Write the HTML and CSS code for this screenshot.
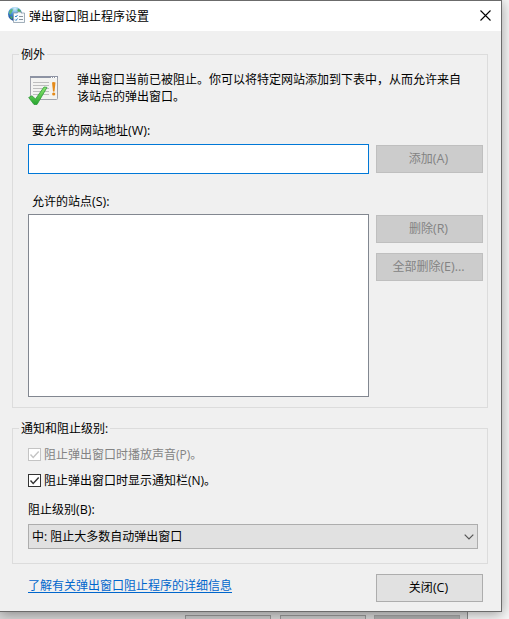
FILE: index.html
```html
<!DOCTYPE html>
<html lang="zh-CN">
<head>
<meta charset="utf-8">
<title>弹出窗口阻止程序设置</title>
<link rel="stylesheet" href="styles.css">
</head>
<body>
<div class="desktop">
<main class="dialog">
  <header class="titlebar">
    <svg class="app-icon" width="17" height="17" viewBox="0 0 17 17">
      <defs><radialGradient id="globe" cx="50%" cy="12%" r="90%"><stop offset="0" stop-color="#d5f1fa"/><stop offset=".45" stop-color="#4795da"/><stop offset="1" stop-color="#153f91"/></radialGradient></defs>
      <circle cx="7" cy="7" r="7" fill="url(#globe)"/>
      <path d="M10 1.500l2.500 2 1 3-2.500-.5-1.500-2.500z" fill="#4fae55"/>
      <path d="M1.500 4l2-2 1.500.5-1 2.500-1.500 2.500-1.500-.5z" fill="#5cb87a"/>
      <path d="M2.500 9l2 1-.5 2-1.500-1z" fill="#4fae55"/>
      <path d="M5.500 6h4v-1h3.500v1h3.500v9.500h-11z" fill="#f7fafc" stroke="#8a9aa8" stroke-width=".8"/>
      <path d="M7 9l1 1 1.500-2M7 12.500l1 1 1.500-2" fill="none" stroke="#2d83c7"/>
      <path d="M11 9.500h4M11 12.500h4" stroke="#8a949e"/>
    </svg>
    <h1>弹出窗口阻止程序设置</h1>
    <svg class="close" width="11" height="11" viewBox="0 0 11 11"><path d="M.5 .5l10 10M10.500 .5l-10 10" stroke="#000" stroke-width="1.100"/></svg>
  </header>

  <fieldset class="group exceptions">
    <legend>例外</legend>
    <div class="intro">
      <svg class="status-icon" width="32" height="32" viewBox="0 0 32 32">
        <defs>
          <linearGradient id="check" x2="0" y2="1"><stop stop-color="#8ee86f"/><stop offset="1" stop-color="#27a52f"/></linearGradient>
        </defs>
        <rect x="2.500" y="2.500" width="27" height="23" rx="1" fill="#f3f3f1" stroke="#a2a4ad"/>
        <path d="M2 3h28" stroke="#8d93a3" stroke-width="2"/>
        <path d="M23 3.500h1m1 0h1m1 0h2" stroke="#fff"/>
        <path d="M5 8.500h16M5 11.500h16M5 14.500h16M5 17.500h16M5 20.500h16" stroke="#bebebe"/>
        <path d="M24 8.500q1.500-1 3.500 0l-1 9h-1.500z" fill="#e58a19"/><circle cx="25.700" cy="20" r="1.600" fill="#e58a19"/>
        <path d="M.7 23.500l3.200-1.700 3.600 3.200 8.500-12 3 .4L9 30.500H6z" fill="url(#check)" stroke="#2f9b38" stroke-width=".8"/>
      </svg>
      <p>弹出窗口当前已被阻止。你可以将特定网站添加到下表中，从而允许来自<br>该站点的弹出窗口。</p>
    </div>
    <label class="field-label" for="site">要允许的网站地址<span class="key">(W):</span></label>
    <div class="row">
      <input id="site" class="site" type="text">
      <button class="btn" disabled>添加<span class="key">(A)</span></button>
    </div>
    <div class="field-label allowed">允许的站点<span class="key">(S):</span></div>
    <div class="row">
      <div class="list"></div>
      <div class="actions">
        <button class="btn" disabled>删除<span class="key">(R)</span></button>
        <button class="btn" disabled>全部删除<span class="key">(E)...</span></button>
      </div>
    </div>
  </fieldset>

  <fieldset class="group notices">
    <legend>通知和阻止级别:</legend>
    <div class="option off"><svg class="box" width="13" height="13" viewBox="0 0 13 13"><rect x=".5" y=".5" width="12" height="12"/><path d="M2.500 6.500l2.700 3 5.500-6"/></svg><span>阻止弹出窗口时播放声音(P)。</span></div>
    <div class="option"><svg class="box" width="13" height="13" viewBox="0 0 13 13"><rect x=".5" y=".5" width="12" height="12"/><path d="M2.500 6.500l2.700 3 5.500-6"/></svg><span>阻止弹出窗口时显示通知栏(N)。</span></div>
    <div class="level-label">阻止级别<span class="key">(B):</span></div>
    <div class="select"><span>中: 阻止大多数自动弹出窗口</span><svg width="10" height="6" viewBox="0 0 10 6"><path d="M.7 .7L5 5 9.300 .7" fill="none" stroke="#555" stroke-width="1.200"/></svg></div>
  </fieldset>

  <footer class="footer">
    <a href="#">了解有关弹出窗口阻止程序的详细信息</a>
    <button class="btn">关闭<span class="key">(C)</span></button>
  </footer>
</main>
<div class="parent-window"><i></i><i></i><i class="dim"></i></div>
</div>
</body>
</html>
```
FILE: styles.css
```css
* { box-sizing: border-box; }
body {
  margin: 0;
  font: 12px/17px "Open Sans", "Noto Sans CJK SC", sans-serif;
  color: #000;
  background: #fff;
}
.desktop { height: 619px; overflow: hidden; background: #f7f7f7; }
.dialog {
  position: relative;
  width: 502px;
  height: 612px;
  background: #f0f0f0;
  border: 1px solid #6b6b6b;
  border-left: 0;
  box-shadow: 0 2px 12px rgba(0, 0, 0, .38);
}
.titlebar {
  display: flex;
  align-items: center;
  height: 30px;
  padding: 0 10px 0 8px;
  background: #fff;
}
.app-icon { margin-top: -2px; }
.titlebar h1 { margin: 0 0 0 4px; font: inherit; }
.close { margin-left: auto; margin-top: -2px; }
.key { font-size: 12.5px; line-height: 1; }
.group {
  width: 476px;
  min-width: 0;
  margin: 0 0 0 12px;
  padding: 0 4px 0 15px;
  border: 1px solid #dcdcdc;
}
.group legend { height: 17px; margin-left: -9px; padding: 0 2px; }
.exceptions { height: 362px; margin-top: 15px; }
.intro { display: flex; height: 59px; padding-top: 8px; }
.status-icon { margin-top: 3px; }
.intro p { margin: 0 0 0 17px; white-space: nowrap; }
.field-label { display: block; height: 22px; padding-left: 4px; }
.row { display: flex; gap: 7px; align-items: flex-start; }
.site {
  width: 341px;
  height: 30px;
  padding: 0 4px;
  border: 1px solid #0078d7;
  background: #fff;
  outline: 0;
}
.btn {
  flex: none;
  width: 107px;
  height: 28px;
  padding: 0 2px 1px 0;
  border: 1px solid #adadad;
  background: #e1e1e1;
  font: inherit;
  color: #000;
}
.btn:disabled { border-color: #bfbfbf; background: #ccc; color: #838383; }
.row > .btn { margin-top: 1px; }
.allowed { margin-top: 19px; height: 21px; }
.list { width: 341px; height: 183px; border: 1px solid #828790; background: #fff; }
.actions { display: grid; gap: 10px; padding-top: 1px; }
.notices { height: 144px; margin-top: 12px; padding-right: 9px; }
.option { display: flex; align-items: center; gap: 3px; height: 17px; margin-top: 9px; }
.box { fill: #fff; stroke: #333; }
.box path { fill: none; stroke-width: 1.4; }
.off { color: #838383; }
.off .box { stroke: #c4c4c4; }
.level-label { height: 23px; margin-top: 12px; }
.select {
  display: flex;
  align-items: center;
  justify-content: space-between;
  height: 25px;
  padding: 0 3px;
  border: 1px solid #adadad;
  background: #e1e1e1;
}
.footer {
  display: flex;
  justify-content: space-between;
  padding: 10px 18px 0 28px;
}
.footer a { height: 17px; margin-top: 3px; color: #0066cc; text-underline-offset: 2px; }
.parent-window {
  display: flex;
  gap: 9px;
  width: 468px;
  height: 7px;
  padding: 3px 0 0 185px;
  border-right: 1px solid #8b8b8b;
  background: #d8d8d8;
}
.parent-window i { width: 86px; height: 8px; border: 1px solid #999; background: #ccc; }
.parent-window .dim { margin-left: -1px; background: #b1b1b1; border-color: #a5a5a5; }
```
